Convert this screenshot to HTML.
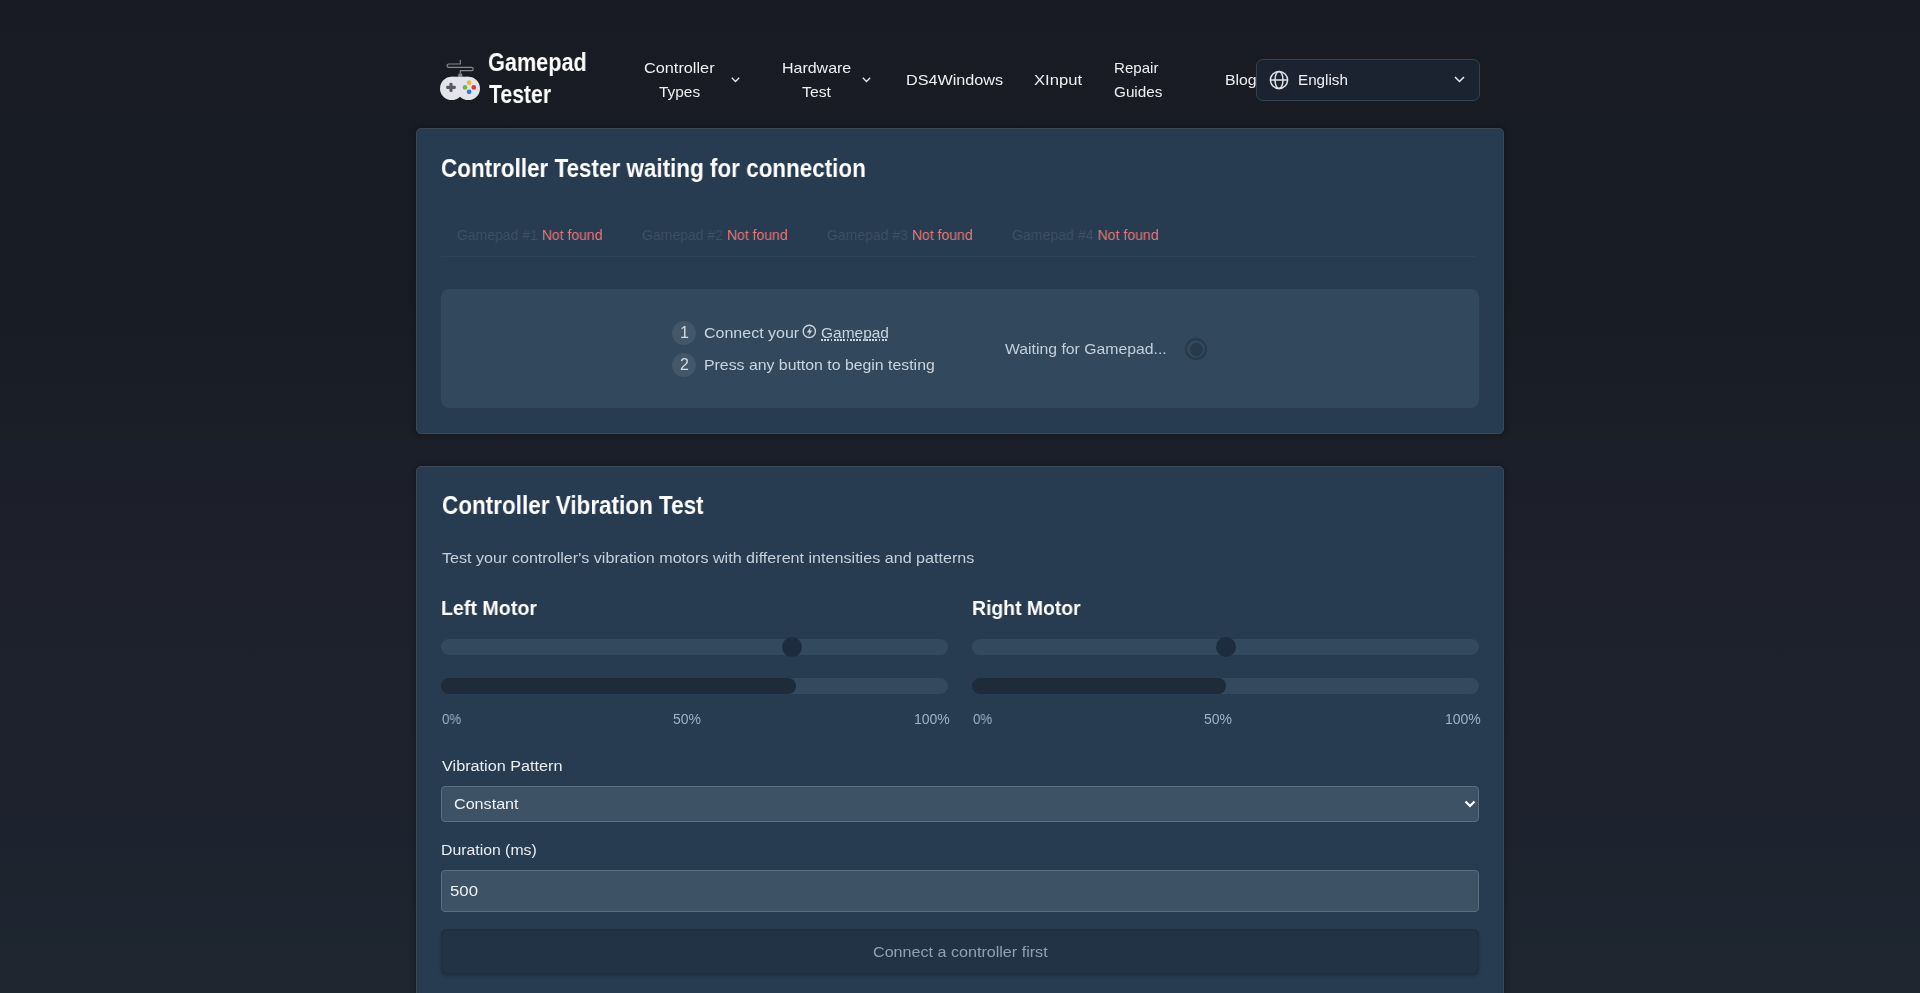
<!DOCTYPE html>
<html>
<head>
<meta charset="utf-8">
<style>
html,body{margin:0;padding:0;}
body{width:1920px;height:993px;overflow:hidden;position:relative;
  background:linear-gradient(180deg,#191b24 0%,#181d25 30%,#1a1e27 42%,#1d202b 52%,#1d222d 75%,#1e2630 100%);
  font-family:"Liberation Sans",sans-serif;color:#fff;-webkit-font-smoothing:antialiased;}
.t{position:absolute;white-space:nowrap;line-height:1;transform-origin:0 0;will-change:transform;}
.card{position:absolute;left:416px;width:1086px;border:1px solid #3a4a59;border-radius:5px;
  background:#273c51;
  box-shadow:0 0 6px rgba(0,0,0,0.35);}
.inner{position:absolute;left:441px;top:289px;width:1038px;height:119px;border-radius:8px;background:#32485c;}
.circ{position:absolute;width:24px;height:24px;border-radius:50%;background:#42576a;}
.track{position:absolute;height:16px;border-radius:8px;background:#33495d;}
.fill{position:absolute;height:16px;border-radius:8px;background:#1d2b3b;}
.thumb{position:absolute;width:20px;height:20px;border-radius:50%;background:#1d2d3f;}
.gp{color:#3f5163}.nf{color:#ee7676}
.field{position:absolute;left:441px;width:1036px;border:1px solid #5a6e81;border-radius:4px;background:#3d5265;}
</style>
</head>
<body>
<!-- header -->
<svg style="position:absolute;left:434px;top:50px" width="56" height="58" viewBox="0 0 56 58">
  <path d="M26.3 10 V14 H14.8 a1.7 1.7 0 0 0 0 3.4 H37.6 a1.65 1.65 0 0 1 0 3.3 H26.3 V23.6" fill="none" stroke="#85888d" stroke-width="1.2"/>
  <path d="M24.6 23.4 H28 L28.6 26.8 H24 Z" fill="#85888d"/>
  <circle cx="17.7" cy="38.4" r="11.7" fill="#e4e5ea"/>
  <circle cx="34.3" cy="38.4" r="11.7" fill="#e4e5ea"/>
  <rect x="17.7" y="26.7" width="16.6" height="13" fill="#e4e5ea"/>
  <rect x="12.2" y="35.8" width="9.6" height="3.1" rx="1.2" fill="#55595f"/>
  <rect x="15.45" y="32.8" width="3.1" height="9.2" rx="1.2" fill="#55595f"/>
  <circle cx="35.1" cy="32.7" r="2.35" fill="#f2b634"/>
  <circle cx="31" cy="37.4" r="2.35" fill="#6cb84a"/>
  <circle cx="39.8" cy="37.4" r="2.35" fill="#d8393f"/>
  <circle cx="35.1" cy="41.8" r="2.35" fill="#2f78d6"/>
</svg>

<svg style="position:absolute;left:731px;top:77px" width="9" height="6" viewBox="0 0 9 6"><path d="M0.8 0.8 L4.5 4.5 L8.2 0.8" fill="none" stroke="#e8eaee" stroke-width="1.3"/></svg>
<svg style="position:absolute;left:862px;top:77px" width="9" height="6" viewBox="0 0 9 6"><path d="M0.8 0.8 L4.5 4.5 L8.2 0.8" fill="none" stroke="#e8eaee" stroke-width="1.3"/></svg>

<div style="position:absolute;left:1256px;top:59px;width:222px;height:40px;border:1px solid #34434f;border-radius:7px;background:#1c2330;"></div>
<svg style="position:absolute;left:1269px;top:70px" width="20" height="20" viewBox="0 0 20 20">
  <circle cx="10" cy="10" r="8.6" fill="none" stroke="#dfe3e9" stroke-width="1.5"/>
  <ellipse cx="10" cy="10" rx="4" ry="8.6" fill="none" stroke="#dfe3e9" stroke-width="1.5"/>
  <line x1="1.4" y1="10" x2="18.6" y2="10" stroke="#dfe3e9" stroke-width="1.5"/>
</svg>
<svg style="position:absolute;left:1454px;top:76px" width="11" height="7" viewBox="0 0 11 7"><path d="M1 1 L5.5 5.5 L10 1" fill="none" stroke="#e8eaee" stroke-width="1.5"/></svg>

<!-- card 1 -->
<div class="card" style="top:128px;height:304px;"></div>

<div style="position:absolute;left:441px;top:256px;width:1034px;height:1px;background:#2e4356;"></div>

<div class="inner"></div>
<div class="circ" style="left:672px;top:321px;"></div>
<div class="circ" style="left:672px;top:353px;"></div>
<svg style="position:absolute;left:802px;top:324px" width="15" height="15" viewBox="0 0 15 15">
  <circle cx="7.3" cy="7.4" r="6.1" fill="none" stroke="#c9d4de" stroke-width="1.4"/>
  <path d="M8.8 3 L4.8 8.4 H7.3 L6.3 12 L10.3 6.5 H7.9 Z" fill="#c9d4de"/>
</svg>
<div style="position:absolute;left:821px;top:339.2px;width:66px;height:2px;background:repeating-linear-gradient(90deg,#c9d4de 0 1.8px,transparent 1.8px 3.2px);"></div>
<div style="position:absolute;left:1185px;top:338px;width:18px;height:18px;border:2.5px solid #263a4c;border-radius:50%;"></div>
<div style="position:absolute;left:1190px;top:343px;width:13px;height:13px;background:#263a4c;border-radius:50%;"></div>
<!-- card 2 -->
<div class="card" style="top:466px;height:560px;"></div>


<div class="track" style="left:441px;top:639px;width:507px;"></div>
<div class="thumb" style="left:782px;top:637px;"></div>
<div class="track" style="left:441px;top:678px;width:507px;"></div>
<div class="fill" style="left:441px;top:678px;width:355px;"></div>

<div class="track" style="left:972px;top:639px;width:507px;"></div>
<div class="thumb" style="left:1216px;top:637px;"></div>
<div class="track" style="left:972px;top:678px;width:507px;"></div>
<div class="fill" style="left:972px;top:678px;width:254px;"></div>

<div class="field" style="top:786px;height:34px;"></div>
<svg style="position:absolute;left:1464px;top:800px" width="12" height="8" viewBox="0 0 12 8"><path d="M1.5 1.5 L6 6 L10.5 1.5" fill="none" stroke="#fff" stroke-width="2.2"/></svg>

<div class="field" style="top:870px;height:40px;"></div>

<div style="position:absolute;left:441px;top:929px;width:1038px;height:46px;border-radius:6px;background:#223345;box-shadow:inset 0 0 0 1.5px #1f3044,0 1px 3px rgba(0,0,0,0.18);"></div>
<div class="t" id="logo1" style="left:488.42px;top:49.01px;font-size:26px;font-weight:bold;color:#ffffff;transform:scaleX(0.8336);">Gamepad</div>
<div class="t" id="logo2" style="left:489.34px;top:81.01px;font-size:26px;font-weight:bold;color:#ffffff;transform:scaleX(0.8158);">Tester</div>
<div class="t" id="n1a" style="left:643.68px;top:60.90px;font-size:14.5px;color:#eef0f3;transform:scaleX(1.1226);">Controller</div>
<div class="t" id="n1b" style="left:658.97px;top:85.02px;font-size:14.5px;color:#eef0f3;transform:scaleX(1.0632);">Types</div>
<div class="t" id="n2a" style="left:781.70px;top:61.02px;font-size:14.5px;color:#eef0f3;transform:scaleX(1.1016);">Hardware</div>
<div class="t" id="n2b" style="left:802.43px;top:85.02px;font-size:14.5px;color:#eef0f3;transform:scaleX(1.0885);">Test</div>
<div class="t" id="n3" style="left:905.68px;top:72.70px;font-size:14.5px;color:#eef0f3;transform:scaleX(1.1163);">DS4Windows</div>
<div class="t" id="n4" style="left:1033.65px;top:72.70px;font-size:14.5px;color:#eef0f3;transform:scaleX(1.1463);">XInput</div>
<div class="t" id="n5a" style="left:1113.76px;top:60.77px;font-size:14.5px;color:#eef0f3;transform:scaleX(1.0405);">Repair</div>
<div class="t" id="n5b" style="left:1113.75px;top:84.52px;font-size:14.5px;color:#eef0f3;transform:scaleX(1.0533);">Guides</div>
<div class="t" id="n6" style="left:1224.88px;top:72.81px;font-size:14.5px;color:#eef0f3;transform:scaleX(1.0889);">Blog</div>
<div class="t" id="lang" style="left:1297.75px;top:73.02px;font-size:14.5px;color:#eef0f3;transform:scaleX(1.0500);">English</div>
<div class="t" id="title1" style="left:440.94px;top:155.01px;font-size:26px;font-weight:bold;color:#ffffff;transform:scaleX(0.8633);">Controller Tester waiting for connection</div>
<div class="t" id="tab1" style="left:456.85px;top:227.90px;font-size:14.5px;transform:scaleX(0.9651);"><span class="gp">Gamepad #1</span> <span class="nf">Not found</span></div>
<div class="t" id="tab2" style="left:641.85px;top:227.90px;font-size:14.5px;transform:scaleX(0.9664);"><span class="gp">Gamepad #2</span> <span class="nf">Not found</span></div>
<div class="t" id="tab3" style="left:826.85px;top:227.90px;font-size:14.5px;transform:scaleX(0.9664);"><span class="gp">Gamepad #3</span> <span class="nf">Not found</span></div>
<div class="t" id="tab4" style="left:1011.84px;top:227.90px;font-size:14.5px;transform:scaleX(0.9732);"><span class="gp">Gamepad #4</span> <span class="nf">Not found</span></div>
<div class="t" id="d1" style="left:679.50px;top:325.01px;font-size:16px;color:#d3dce5;">1</div>
<div class="t" id="d2" style="left:679.50px;top:357.01px;font-size:16px;color:#d3dce5;">2</div>
<div class="t" id="s1" style="left:704.32px;top:325.00px;font-size:15px;color:#c9d4de;transform:scaleX(1.0670);">Connect your</div>
<div class="t" id="s1g" style="left:821.28px;top:325.00px;font-size:15px;color:#c9d4de;transform:scaleX(1.0320);">Gamepad</div>
<div class="t" id="s2" style="left:704.33px;top:357.00px;font-size:15px;color:#c9d4de;transform:scaleX(1.0562);">Press any button to begin testing</div>
<div class="t" id="wait" style="left:1004.62px;top:340.50px;font-size:15px;color:#c3ceda;transform:scaleX(1.0520);">Waiting for Gamepad...</div>
<div class="t" id="title2" style="left:441.54px;top:492.71px;font-size:25.5px;font-weight:bold;color:#ffffff;transform:scaleX(0.8820);">Controller Vibration Test</div>
<div class="t" id="desc" style="left:441.80px;top:550.30px;font-size:15px;color:#c5d0da;transform:scaleX(1.0747);">Test your controller's vibration motors with different intensities and patterns</div>
<div class="t" id="lm" style="left:441.09px;top:597.10px;font-size:21px;font-weight:bold;color:#ffffff;transform:scaleX(0.9347);">Left Motor</div>
<div class="t" id="rm" style="left:972.11px;top:597.10px;font-size:21px;font-weight:bold;color:#ffffff;transform:scaleX(0.9224);">Right Motor</div>
<div class="t" id="p0a" style="left:441.80px;top:712.01px;font-size:14px;color:#9fb2c4;transform:scaleX(0.9500);">0%</div>
<div class="t" id="p50a" style="left:672.80px;top:712.01px;font-size:14px;color:#9fb2c4;">50%</div>
<div class="t" id="p100a" style="left:913.60px;top:712.01px;font-size:14px;color:#9fb2c4;">100%</div>
<div class="t" id="p0b" style="left:972.80px;top:712.01px;font-size:14px;color:#9fb2c4;transform:scaleX(0.9500);">0%</div>
<div class="t" id="p50b" style="left:1203.80px;top:712.01px;font-size:14px;color:#9fb2c4;">50%</div>
<div class="t" id="p100b" style="left:1444.60px;top:712.01px;font-size:14px;color:#9fb2c4;">100%</div>
<div class="t" id="vp" style="left:442.21px;top:758.00px;font-size:15.3px;color:#e9eef3;transform:scaleX(1.0602);">Vibration Pattern</div>
<div class="t" id="const" style="left:453.63px;top:796.81px;font-size:14.5px;color:#eef2f6;transform:scaleX(1.1123);">Constant</div>
<div class="t" id="dur" style="left:440.77px;top:842.00px;font-size:15.3px;color:#e9eef3;transform:scaleX(1.0330);">Duration (ms)</div>
<div class="t" id="v500" style="left:450.43px;top:884.02px;font-size:14.5px;color:#eef2f6;transform:scaleX(1.1565);">500</div>
<div class="t" id="btn" style="left:872.73px;top:943.61px;font-size:15px;color:#8ea1b2;transform:scaleX(1.0741);">Connect a controller first</div>
</body>
</html>
